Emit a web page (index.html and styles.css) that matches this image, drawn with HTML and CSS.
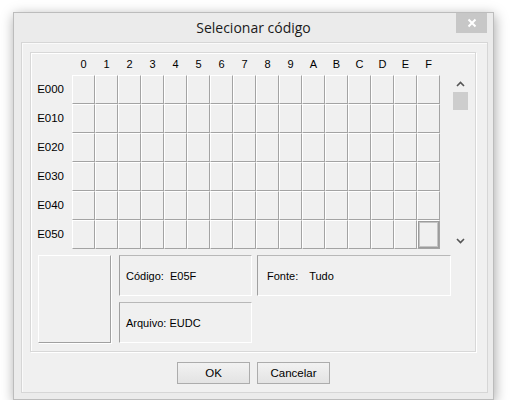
FILE: index.html
```html
<!DOCTYPE html>
<html lang="pt">
<head>
<meta charset="utf-8">
<title>Selecionar código</title>
<link rel="stylesheet" href="styles.css">
</head>
<body>
<div class="window">
  <div class="titlebar">
    <span class="spacer"></span>
    <span class="title">Selecionar código</span>
    <span class="close-wrap">
      <span class="close">
        <svg width="10" height="10" viewBox="0 0 10 10"><path d="M1.5 1.5 L8.5 8.5 M8.5 1.5 L1.5 8.5" stroke="#fff" stroke-width="2" fill="none"/></svg>
      </span>
    </span>
  </div>
  <div class="client">
    <div class="panel">
      <div class="charmap">
        <div class="table">
          <div class="hdr">
            <span>0</span><span>1</span><span>2</span><span>3</span><span>4</span><span>5</span><span>6</span><span>7</span><span>8</span><span>9</span><span>A</span><span>B</span><span>C</span><span>D</span><span>E</span><span>F</span>
          </div>
          <div class="row"><span class="lbl">E000</span><div class="cells"><i></i><i></i><i></i><i></i><i></i><i></i><i></i><i></i><i></i><i></i><i></i><i></i><i></i><i></i><i></i><i></i></div></div>
          <div class="row"><span class="lbl">E010</span><div class="cells"><i></i><i></i><i></i><i></i><i></i><i></i><i></i><i></i><i></i><i></i><i></i><i></i><i></i><i></i><i></i><i></i></div></div>
          <div class="row"><span class="lbl">E020</span><div class="cells"><i></i><i></i><i></i><i></i><i></i><i></i><i></i><i></i><i></i><i></i><i></i><i></i><i></i><i></i><i></i><i></i></div></div>
          <div class="row"><span class="lbl">E030</span><div class="cells"><i></i><i></i><i></i><i></i><i></i><i></i><i></i><i></i><i></i><i></i><i></i><i></i><i></i><i></i><i></i><i></i></div></div>
          <div class="row"><span class="lbl">E040</span><div class="cells"><i></i><i></i><i></i><i></i><i></i><i></i><i></i><i></i><i></i><i></i><i></i><i></i><i></i><i></i><i></i><i></i></div></div>
          <div class="row"><span class="lbl">E050</span><div class="cells"><i></i><i></i><i></i><i></i><i></i><i></i><i></i><i></i><i></i><i></i><i></i><i></i><i></i><i></i><i></i><i class="sel"><b></b></i></div></div>
        </div>
        <div class="scrollbar">
          <span class="arrow">
            <svg width="9" height="6" viewBox="0 0 9 6"><path d="M1 5 L4.5 1.5 L8 5" stroke="#555" stroke-width="1.6" fill="none"/></svg>
          </span>
          <span class="thumb"></span>
          <span class="track"></span>
          <span class="arrow">
            <svg width="9" height="6" viewBox="0 0 9 6"><path d="M1 1 L4.5 4.5 L8 1" stroke="#555" stroke-width="1.6" fill="none"/></svg>
          </span>
        </div>
      </div>
      <div class="info">
        <div class="preview"></div>
        <div class="fields">
          <div class="fields-row">
            <div class="field code">Código:&nbsp; E05F</div>
            <div class="field font">Fonte:<span class="val">Tudo</span></div>
          </div>
          <div class="field file">Arquivo: EUDC</div>
        </div>
      </div>
    </div>
    <div class="buttons">
      <button class="btn">OK</button>
      <button class="btn">Cancelar</button>
    </div>
  </div>
</div>
</body>
</html>
```

FILE: styles.css
```css
* { box-sizing: border-box; }

body {
  margin: 0;
  background: #ffffff;
  font-family: "Liberation Sans", Arial, sans-serif;
  font-size: 11px;
  color: #000;
}

.window {
  margin: 12px 0 0 13px;
  width: 481px;
  height: 388px;
  background: #ebebeb;
  border: 1px solid #bcbcbc;
  box-shadow: 1px 3px 12px rgba(0, 0, 0, 0.35);
  padding: 0 5px 6px 7px;
  display: flex;
  flex-direction: column;
}

.titlebar {
  height: 29px;
  display: grid;
  grid-template-columns: 1fr auto 1fr;
  align-items: start;
  margin-right: -5px;
  margin-left: -7px;
}

.title {
  font-family: "Open Sans", "Noto Sans", sans-serif;
  font-size: 14px;
  line-height: 29px;
  color: #1a1a1a;
}

.close-wrap {
  display: flex;
  justify-content: flex-end;
  padding-right: 6px;
}

.close {
  width: 31px;
  height: 20px;
  background: #c7c7c7;
  display: flex;
  align-items: center;
  justify-content: center;
}

.client {
  flex: 1;
  background: #f0f0f0;
  border: 1px solid #d6d6d6;
  box-shadow: inset 1px 1px 0 #fafafa;
  padding: 9px 0 0 8px;
}

.panel {
  width: 446px;
  height: 300px;
  border: 1px solid #d8d8d8;
  box-shadow: inset 1px 1px 0 #ffffff, 1px 1px 0 #ffffff;
}

.charmap {
  display: flex;
  align-items: flex-start;
}

.hdr {
  height: 22px;
  padding-left: 41px;
  display: flex;
  align-items: flex-end;
  padding-bottom: 4px;
}

.hdr span {
  width: 23px;
  text-align: center;
  line-height: 13px;
}

.row {
  display: flex;
  height: 29px;
}

.lbl {
  width: 41px;
  text-align: right;
  padding-right: 8px;
  line-height: 29px;
  font-size: 11.5px;
}

.cells {
  display: flex;
}

.cells i {
  display: block;
  width: 23px;
  height: 29px;
  border-left: 1px solid #ffffff;
  border-top: 1px solid #ffffff;
  border-right: 1px solid #a3a3a3;
  border-bottom: 1px solid #a3a3a3;
}

.cells i.sel b {
  display: block;
  width: 21px;
  height: 27px;
  border: 1px solid #9c9c9c;
  box-shadow: inset 1px 1px 0 #c4c4c4, inset -1px -1px 0 #c4c4c4;
}

.scrollbar {
  margin-top: 22px;
  margin-left: 12px;
  width: 17px;
  height: 174px;
  display: flex;
  flex-direction: column;
  align-items: center;
}

.arrow {
  height: 17px;
  width: 17px;
  display: flex;
  align-items: center;
  justify-content: center;
}

.thumb {
  width: 15px;
  height: 18px;
  background: #cdcdcd;
}

.track {
  flex: 1;
}

.info {
  display: flex;
  margin-top: 6px;
  padding-left: 7px;
}

.preview {
  width: 73px;
  height: 88px;
  border: 1px solid;
  border-color: #ffffff #a0a0a0 #a0a0a0 #ffffff;
  box-shadow: 1px 1px 0 #ffffff;
}

.fields {
  margin-left: 8px;
  display: flex;
  flex-direction: column;
  gap: 6px;
}

.fields-row {
  display: flex;
  gap: 5px;
}

.field {
  height: 41px;
  border: 1px solid;
  border-color: #b8b8b8 #ffffff #ffffff #a0a0a0;
  display: flex;
  align-items: center;
  padding-left: 6px;
  padding-top: 1px;
}

.code, .file {
  width: 133px;
}

.font {
  width: 194px;
  padding-left: 9px;
}

.val {
  margin-left: 11px;
}

.buttons {
  display: flex;
  justify-content: center;
  gap: 7px;
  margin-top: 10px;
  padding-right: 10px;
}

.btn {
  width: 73px;
  height: 22px;
  border: 1px solid #acacac;
  background: linear-gradient(#f2f2f2, #e3e3e3);
  font-family: "Liberation Sans", Arial, sans-serif;
  font-size: 11.5px;
  color: #000;
  padding: 0;
}
```
